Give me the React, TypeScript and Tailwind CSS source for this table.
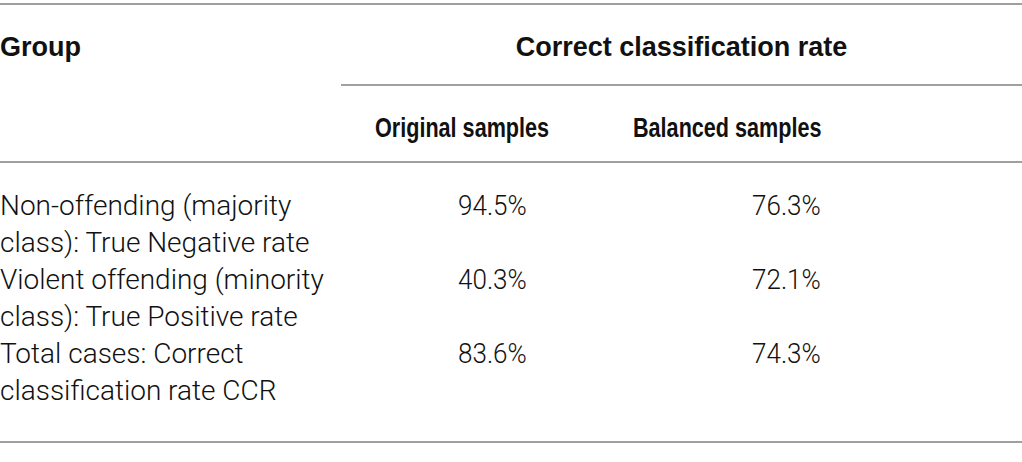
const rows = [
  { label: ['Non-offending (majority', 'class): True Negative rate'], original: '94.5%', balanced: '76.3%' },
  { label: ['Violent offending (minority', 'class): True Positive rate'], original: '40.3%', balanced: '72.1%' },
  { label: ['Total cases: Correct', 'classification rate CCR'], original: '83.6%', balanced: '74.3%' },
];

const App = () => {
  return (
    <div className="w-[1022px] h-[462px] bg-white text-[#111] pt-[3px] font-['Liberation_Sans',Arial,sans-serif]">
      <div className="border-t-2 border-[#a0a0a0]">
        {/* header */}
        <div className="grid grid-cols-[341px_1fr]">
          <div className="pt-[27px] text-[27px] leading-[30px] font-bold">Group</div>
          <div>
            <div className="h-[79px] pt-[27px] text-center text-[27px] leading-[30px] font-bold">
              Correct classification rate
            </div>
            <div className="border-t-2 border-[#a0a0a0] grid grid-cols-[292px_1fr] h-[77px] pt-[27px] text-[27px] leading-[30px] font-bold">
              <div className="pl-[34px]">
                <span className="inline-block origin-left scale-x-[0.8] whitespace-nowrap">Original samples</span>
              </div>
              <div>
                <span className="inline-block origin-left scale-x-[0.8] whitespace-nowrap">Balanced samples</span>
              </div>
            </div>
          </div>
        </div>

        {/* body */}
        <div className="border-t-2 border-[#a0a0a0] pt-[24px] pb-[32px] font-['Roboto',sans-serif] font-light text-[28px] leading-[37px]">
          {rows.map((r, i) => (
            <div key={i} className="grid grid-cols-[458px_294px_1fr]">
              <div>
                {r.label.map((l, j) => (
                  <div key={j}>{l}</div>
                ))}
              </div>
              <div>
                <span className="inline-block origin-left scale-x-[0.93]">{r.original}</span>
              </div>
              <div>
                <span className="inline-block origin-left scale-x-[0.93]">{r.balanced}</span>
              </div>
            </div>
          ))}
        </div>
        <div className="border-t-2 border-[#a0a0a0]" />
      </div>
    </div>
  );
};

export default App;
